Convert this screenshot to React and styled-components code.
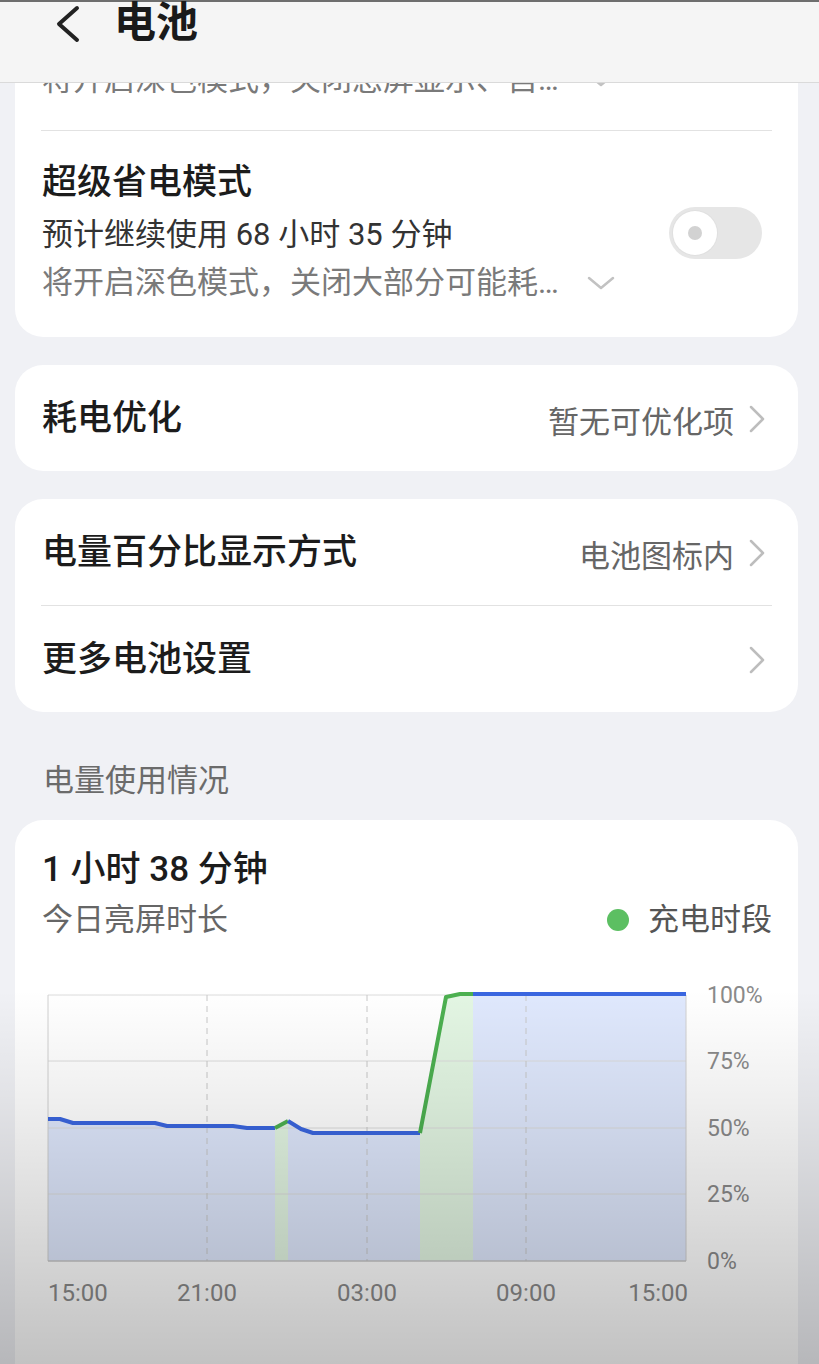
import React from 'react'
import styled, { createGlobalStyle } from 'styled-components'

const GlobalStyle = createGlobalStyle`
  html, body {
    margin: 0;
    padding: 0;
    background: #f0f1f5;
    font-family: Roboto, "Noto Sans CJK SC", sans-serif;
    overflow: hidden;
  }
`

const Screen = styled.div`
  position: relative;
  width: 819px;
  height: 1364px;
  overflow: hidden;
  background: #f0f1f5;
`

const Header = styled.header`
  position: absolute;
  top: 0;
  left: 0;
  right: 0;
  height: 80px;
  z-index: 5;
  display: flex;
  align-items: flex-start;
  gap: 33px;
  padding-left: 55px;
  background: #f5f5f5;
  border-top: 2px solid #6e6e6e;
  border-bottom: 1px solid #dadada;
  h1 {
    margin: -3px 0 0;
    font-size: 42px;
    line-height: 48px;
    font-weight: 700;
    color: #1a1a1a;
  }
  svg {
    margin-top: 3px;
  }
`

const Content = styled.main`
  display: flex;
  flex-direction: column;
  gap: 28px;
  margin-top: -24px;
`

const Card = styled.section`
  margin: 0 21px 0 15px;
  background: #fff;
  border-radius: 28px;
  overflow: hidden;
`

const Item = styled.div`
  display: flex;
  align-items: center;
  gap: 20px;
  padding: 28px 36px ${p => p.$bottom || 30}px 27px;
`

const Divider = styled.div`
  height: 1px;
  margin: 0 26px;
  background: #e2e2e2;
`

const Texts = styled.div`
  flex: 1;
  min-width: 0;
  display: flex;
  flex-direction: column;
`

const Title = styled.div`
  font-size: 35px;
  line-height: 48px;
  font-weight: 500;
  color: #1c1c1c;
`

const ItemTitle = styled(Title)`
  margin-bottom: 4px;
`

const Sub = styled.div`
  font-size: 31px;
  line-height: 48px;
  color: ${p => (p.$muted ? '#7a7a7a' : '#333')};
  display: flex;
  align-items: center;
  gap: 28px;
  white-space: nowrap;
`

const Row = styled.div`
  display: flex;
  align-items: center;
  height: 106px;
  padding: 2px 32px 0 27px;
  box-sizing: border-box;
`

const RowTitle = styled(Title)`
  flex: 1;
`

const Value = styled.span`
  font-size: 31px;
  color: #666;
  margin-right: 14px;
`

const Toggle = styled.div`
  width: 93px;
  height: 52px;
  border-radius: 26px;
  background: #e6e6e6;
  display: flex;
  align-items: center;
  padding-left: 4px;
  box-sizing: border-box;
  flex-shrink: 0;
  span {
    width: 44px;
    height: 44px;
    border-radius: 50%;
    background: #fff;
    box-shadow: 0 0 0 1px #e0e0e0;
    display: flex;
    align-items: center;
    justify-content: center;
  }
  span::after {
    content: '';
    width: 14px;
    height: 14px;
    border-radius: 50%;
    background: #d2d2d2;
  }
`

const SectionLabel = styled.div`
  padding: 17px 0 0 43px;
  margin-bottom: -13px;
  font-size: 31px;
  line-height: 48px;
  color: #6b6b6b;
`

const UsageCard = styled(Card)`
  padding: 26px 26px 60px 27px;
  min-height: 560px;
`

const UsageTime = styled.div`
  font-size: 35px;
  line-height: 48px;
  font-weight: 500;
  color: #1c1c1c;
`

const UsageMeta = styled.div`
  display: flex;
  justify-content: space-between;
  align-items: center;
  margin-top: 2px;
  font-size: 31px;
  line-height: 48px;
  color: #666;
`

const Legend = styled.span`
  display: flex;
  align-items: center;
  gap: 19px;
  color: #555;
  &::before {
    content: '';
    width: 22px;
    height: 22px;
    border-radius: 50%;
    background: #5cbf62;
  }
`

const Chart = styled.svg`
  display: block;
  margin-top: 28px;
  font-family: Roboto, "Noto Sans CJK SC", sans-serif;
`

const Dim = styled.div`
  position: absolute;
  left: 0;
  right: 0;
  top: 990px;
  bottom: 0;
  pointer-events: none;
  z-index: 4;
  background: linear-gradient(to bottom, rgba(0, 0, 0, 0) 0%, rgba(0, 0, 0, 0.06) 28%, rgba(0, 0, 0, 0.24) 100%);
`

const ChevronRight = () => (
  <svg width="18" height="28" viewBox="0 0 18 28">
    <polyline points="3,2 15,14 3,26" fill="none" stroke="#bdbdbd" strokeWidth="2.5" strokeLinecap="round" strokeLinejoin="round" />
  </svg>
)

const ChevronDown = () => (
  <svg width="28" height="16" viewBox="0 0 28 16">
    <polyline points="2,3 14,13 26,3" fill="none" stroke="#c2c2c2" strokeWidth="2.5" strokeLinecap="round" strokeLinejoin="round" />
  </svg>
)

const BOTTOM = 1259
const segments = [
  { charging: false, pts: [[48, 1117], [60, 1117], [73, 1121], [155, 1121], [167, 1124], [233, 1124], [247, 1126], [275, 1126]] },
  { charging: true, pts: [[275, 1126], [288, 1119]] },
  { charging: false, pts: [[288, 1119], [301, 1127], [313, 1131], [420, 1131]] },
  { charging: true, pts: [[420, 1131], [446, 995], [460, 992], [473, 992]] },
  { charging: false, pts: [[473, 992], [686, 992]] },
]

const toPoints = pts => pts.map(p => p.join(',')).join(' ')
const area = pts => toPoints([[pts[0][0], BOTTOM], ...pts, [pts[pts.length - 1][0], BOTTOM]])

function UsageChart() {
  const rows = [993, 1059, 1126, 1192, 1259]
  const pct = ['100%', '75%', '50%', '25%', '0%']
  const cols = [207, 367, 526]
  const times = [
    { x: 48, t: '15:00', a: 'start' },
    { x: 207, t: '21:00', a: 'middle' },
    { x: 367, t: '03:00', a: 'middle' },
    { x: 526, t: '09:00', a: 'middle' },
    { x: 688, t: '15:00', a: 'end' },
  ]
  return (
    <Chart width="730" height="345" viewBox="42 970 730 345">
      {segments.map((s, i) => (
        <polygon key={'a' + i} points={area(s.pts)} fill={s.charging ? 'rgba(90,200,90,0.17)' : 'rgba(80,125,245,0.18)'} />
      ))}
      {rows.map(y => (
        <line key={y} x1="48" x2="686" y1={y} y2={y} stroke="#dcdcdc" strokeWidth="1" />
      ))}
      {cols.map(x => (
        <line key={x} x1={x} x2={x} y1="993" y2="1259" stroke="#c8c8c8" strokeWidth="1" strokeDasharray="6 5" />
      ))}
      <line x1="48" x2="48" y1="993" y2="1259" stroke="#d0d0d0" />
      <line x1="686" x2="686" y1="993" y2="1259" stroke="#d0d0d0" />
      <line x1="48" x2="686" y1="1259" y2="1259" stroke="#bdbdbd" />
      {segments.map((s, i) => (
        <polyline key={'l' + i} points={toPoints(s.pts)} fill="none" stroke={s.charging ? '#4cb050' : '#3a66e0'} strokeWidth="4" strokeLinejoin="round" />
      ))}
      {rows.map((y, i) => (
        <text key={pct[i]} x="707" y={y + 8} fontSize="23" fill="#8a8a8a">{pct[i]}</text>
      ))}
      {times.map((t, i) => (
        <text key={i} x={t.x} y="1299" fontSize="24" fill="#8a8a8a" textAnchor={t.a}>{t.t}</text>
      ))}
    </Chart>
  )
}

export default function App() {
  return (
    <Screen>
      <GlobalStyle />
      <Header>
        <svg width="26" height="38" viewBox="0 0 26 38">
          <polyline points="22,3 4,19 22,35" fill="none" stroke="#222" strokeWidth="4" strokeLinecap="round" strokeLinejoin="round" />
        </svg>
        <h1>电池</h1>
      </Header>
      <Content>
        <Card>
          <Item $bottom={26}>
            <Texts>
              <ItemTitle>省电模式</ItemTitle>
              <Sub $muted>将开启深色模式，关闭息屏显示、自… <ChevronDown /></Sub>
            </Texts>
          </Item>
          <Divider />
          <Item>
            <Texts>
              <ItemTitle>超级省电模式</ItemTitle>
              <Sub>预计继续使用 68 小时 35 分钟</Sub>
              <Sub $muted>将开启深色模式，关闭大部分可能耗… <ChevronDown /></Sub>
            </Texts>
            <Toggle><span /></Toggle>
          </Item>
        </Card>
        <Card>
          <Row>
            <RowTitle>耗电优化</RowTitle>
            <Value>暂无可优化项</Value>
            <ChevronRight />
          </Row>
        </Card>
        <Card>
          <Row>
            <RowTitle>电量百分比显示方式</RowTitle>
            <Value>电池图标内</Value>
            <ChevronRight />
          </Row>
          <Divider />
          <Row>
            <RowTitle>更多电池设置</RowTitle>
            <ChevronRight />
          </Row>
        </Card>
        <SectionLabel>电量使用情况</SectionLabel>
        <UsageCard>
          <UsageTime>1 小时 38 分钟</UsageTime>
          <UsageMeta>
            今日亮屏时长
            <Legend>充电时段</Legend>
          </UsageMeta>
          <UsageChart />
        </UsageCard>
      </Content>
      <Dim />
    </Screen>
  )
}
